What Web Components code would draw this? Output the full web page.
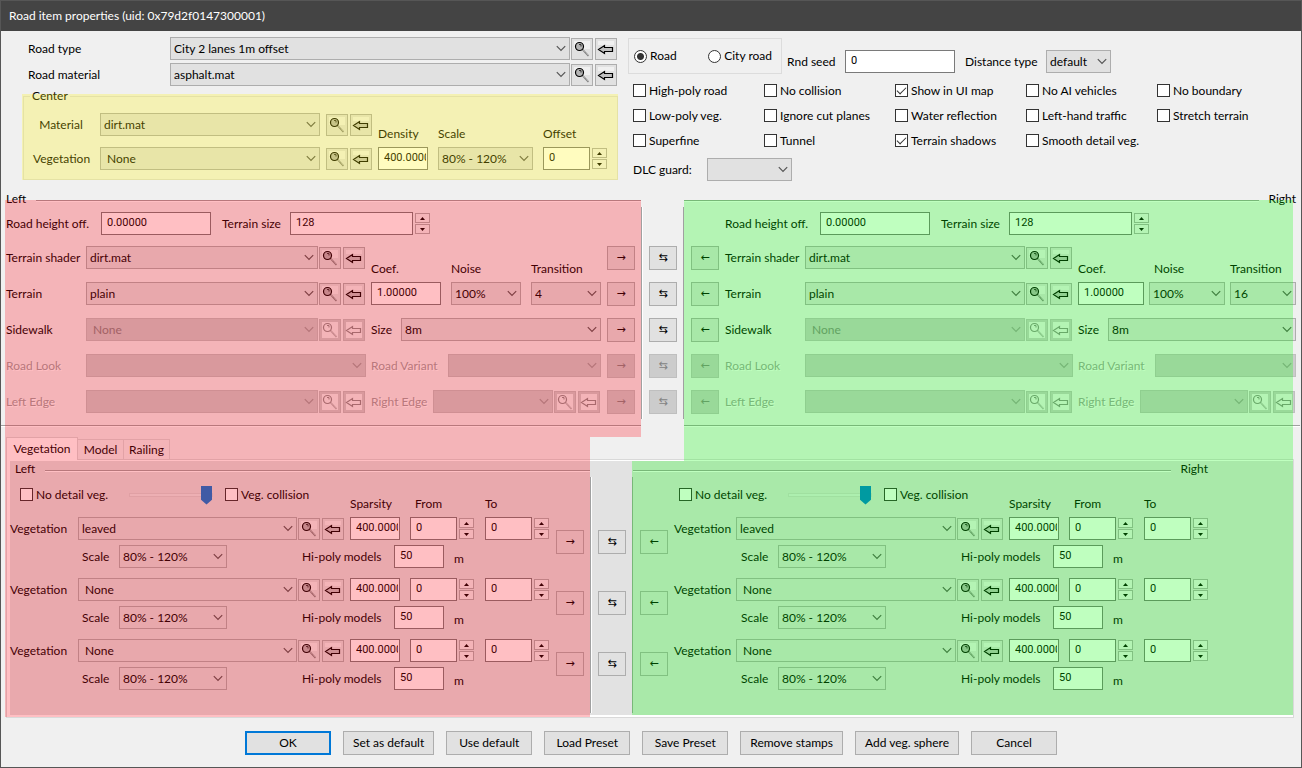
<!DOCTYPE html>
<html lang="en">
<head>
<meta charset="utf-8">
<title>Road item properties</title>
<style>
html,body{margin:0;min-height:100vh}
body{font:12px/16px Lato,"Open Sans",sans-serif;color:#000;background:#f0f0f0;display:flex}
</style>
</head>
<body>
<road-dialog></road-dialog>
<script>
const BASE = `
*{box-sizing:border-box}
:host{display:block}
:host([hidden]){display:none}
button,input,select{font:inherit;color:inherit;margin:0;border-radius:0}
label{white-space:nowrap}
.row{display:flex}
`;
class Ui extends HTMLElement {
  connectedCallback() {
    if (this.shadowRoot) return;
    this.attachShadow({ mode: 'open' }).innerHTML = `<style>${BASE}${this.css()}</style>${this.html()}`;
  }
  at(name, fallback = '') { return this.getAttribute(name) ?? fallback; }
  is(name) { return this.hasAttribute(name) ? name : ''; }
}

/* Search and assign buttons that follow a resource list */
customElements.define('ui-tools', class extends Ui {
  css() { return `
    :host{display:flex;gap:2px;flex:none}
    button{width:22px;height:22px;padding:0;border:1px solid #adadad;background:#e1e1e1;display:block}
    svg{display:block;width:20px;height:20px}
    button:disabled{border:1px solid #bfbfbf;background:#ccc}
    button:disabled .ink{stroke:#8c8c8c} button:disabled .fill{fill:#f0f0f0}
    button:disabled .grip{stroke:#b4b4b4}`; }
  html() { const d = this.is('disabled'); return `
    <button ${d} aria-label="Find"><svg viewBox="0 0 20 20"><path fill="#f0f0f0" d="M2 2h16v${d ? 16 : 8}H2z"/><path class="grip" d="M10.500 10.500 16.500 17" stroke="#808080" stroke-width="1.700"/><path d="m11 11 6 6" stroke="#d0d0d0" stroke-width=".8" stroke-dasharray="1 1"/><circle class="ink fill" cx="7.500" cy="7.500" r="4" fill="#b4b4b4" stroke="#000" stroke-width="1.200"/><path class="ink" d="M7 5.500h2v2" fill="none" stroke="#333" stroke-width="1"/></svg></button>
    <button ${d} aria-label="Use selected"><svg viewBox="0 0 20 20"><path fill="#f0f0f0" d="M2 2h16v${d ? 16 : 4}H2z"/><path class="ink fill" d="M2.500 10.500 8.500 6.500v2h8v4h-8v2z" fill="#c0c0c0" stroke="#000" stroke-width="1.200"/></svg></button>`; }
});

/* Labelled drop-down list */
customElements.define('ui-combo', class extends Ui {
  css() { return `
    :host{display:flex;align-items:center;min-width:0}
    :host([stacked]){flex-direction:column;align-items:stretch;gap:5px}
    :host([stacked]) .box{flex:none}
    :host([stacked]) label{width:auto;padding-left:var(--indent,0px)}
    label{width:var(--lw,auto);flex:none;text-align:var(--la,left);padding-right:var(--lp,0px)}
    :host([disabled][dim]) label{color:#a0a0a0;text-shadow:1px 1px #fff}
    .box{position:relative;flex:1;min-width:0;height:23px}
    select{appearance:none;display:block;width:100%;height:23px;padding:0 18px 0 3px;border:1px solid #adadad;background:#e1e1e1;line-height:20px}
    select:disabled{background:#ccc;border-color:#bfbfbf;color:#838383;opacity:1}
    svg{position:absolute;right:4px;top:8px;width:10px;height:7px;pointer-events:none}
    path{fill:none;stroke:#555;stroke-width:1.200}
    :host([disabled]) path{stroke:#9c9c9c}
    ui-tools{margin-left:var(--tg,1px)}`; }
  html() { const d = this.is('disabled'), l = this.at('label'); return `
    <label for="c">${l}</label>
    <div class="box"><select id="c" ${d}><option>${this.at('value')}</option></select>
    <svg viewBox="0 0 10 7"><path d="M.8 1.200 5 5.400 9.200 1.200"/></svg></div>
    ${this.is('tools') ? `<ui-tools ${d}></ui-tools>` : ''}`; }
});

/* Labelled text box, with an optional up/down pair */
customElements.define('ui-text', class extends Ui {
  css() { return `
    :host{display:flex;align-items:center;min-width:0}
    :host([stacked]){flex-direction:column;align-items:stretch;gap:5px}
    :host([stacked]) label{width:auto;padding-left:var(--indent,0px)}
    label{width:var(--lw,auto);flex:none}
    .row{flex:1;min-width:0}
    input{width:100%;height:23px;padding:0 1px 2px 5px;border:1px solid #7a7a7a;background:#fff;font:11px/16px Roboto,sans-serif}
    .spin{display:grid;gap:1px;margin:1px 0 1px 2px;width:15px;flex:none}
    .spin button{height:10px;padding:0;border:1px solid #adadad;background:#f0f0f0;display:grid;place-items:center}
    svg{display:block;width:5px;height:3px}`; }
  html() { return `
    ${this.at('label') ? `<label for="c">${this.at('label')}</label>` : ''}
    <div class="row"><input id="c" type="text" value="${this.at('value')}" ${this.at('label') ? '' : `aria-label="${this.at('name')}"`}>
    ${this.is('spin') ? `<div class="spin"><button aria-label="Increase"><svg viewBox="0 0 5 3"><path d="M0 3 2.500 0 5 3z"/></svg></button><button aria-label="Decrease"><svg viewBox="0 0 5 3"><path d="M0 0h5L2.500 3z"/></svg></button></div>` : ''}</div>`; }
});

customElements.define('ui-check', class extends Ui {
  css() { return `
    label{display:flex;align-items:center;gap:3px}
    input{appearance:none;width:13px;height:13px;flex:none;border:1px solid #333;background:#fff;display:block}
    input:checked::before{content:"";display:block;width:8px;height:4px;margin:2px 1px;border:solid #333;border-width:0 0 1px 1px;transform:rotate(-45deg)}`; }
  html() { return `<label><input type="checkbox" ${this.is('checked')}>${this.at('label')}</label>`; }
});

/* Column of buttons that copy values between the sides */
customElements.define('copy-column', class extends Ui {
  css() { return `
    :host{display:flex;flex-direction:column;gap:var(--cg,12px);width:28px;flex:none}
    button{height:24px;width:28px;padding:0;border:1px solid #adadad;background:#e1e1e1;font:11px/20px "DejaVu Sans",sans-serif;color:#000}
    button:disabled{background:#ccc;border-color:#bfbfbf;color:#838383}`; }
  html() {
    const n = +this.at('count'), off = +this.at('off', '0');
    return Array.from({ length: n }, (_, i) => `<button ${i >= n - off ? 'disabled' : ''}>${this.at('glyph')}</button>`).join('');
  }
});

/* Caption with an etched line beside it */
customElements.define('ui-caption', class extends Ui {
  css() { return `
    :host{display:flex;align-items:center;gap:10px;height:16px}
    :host([end]){flex-direction:row-reverse}
    i{flex:1;height:2px;margin-top:4px;background:linear-gradient(#a0a0a0 50%,#fff 50%)}`; }
  html() { return `<span>${this.at('label')}</span><i></i>`; }
});

customElements.define('center-group', class extends Ui {
  css() { return `
    :host{position:relative;margin-top:2px}
    :host::after{content:"";position:absolute;inset:6px 0 0 0;background:rgba(255,242,0,.25);pointer-events:none}
    fieldset{margin:0 0 0 1px;padding:9px 10px 9px 9px;border:1px solid #dcdcdc;min-width:0}
    legend{padding:0 2px;margin-left:-3px}
    .row{gap:10px;align-items:flex-end}
    .lists{flex:1;display:flex;flex-direction:column;gap:11px;margin-right:-4px;--lw:67px;--la:center;--lp:11px;--tg:6px}`; }
  html() { return `<fieldset><legend>Center</legend><div class="row">
    <div class="lists"><ui-combo label="Material" value="dirt.mat" tools></ui-combo>
    <ui-combo label="Vegetation" value="&nbsp;None" tools></ui-combo></div>
    <ui-text stacked label="Density" value="400.00000" style="width:50px"></ui-text>
    <ui-combo stacked label="Scale" value="80% - 120%" style="width:95px"></ui-combo>
    <ui-text stacked spin label="Offset" value="0" style="width:64px"></ui-text>
    </div></fieldset>`; }
});

customElements.define('road-options', class extends Ui {
  css() { return `
    .row{gap:10px;align-items:flex-end}
    .row>:not(fieldset){padding-bottom:1px}
    fieldset{margin:0 -5px 0 0;border:1px solid #dcdcdc;padding:0 9px 0 5px;width:154px;height:36px;display:flex;align-items:center;justify-content:space-between}
    fieldset label{display:flex;align-items:center;gap:3px}
    input{appearance:none;width:13px;height:13px;border:1px solid #333;border-radius:50%;background:#fff;display:block;margin:0}
    input:checked{background:radial-gradient(circle,#333 0 3px,#fff 4px)}
    .checks{display:grid;grid-template-columns:repeat(5,131px);grid-auto-rows:25px;align-items:center;margin:4px 0 5px 5px}
    .dlc{margin-left:5px;width:159px;--lw:74px}`; }
  html() { return `<div class="row">
    <fieldset aria-label="Item kind"><label><input type="radio" name="kind" checked>Road</label><label><input type="radio" name="kind">City road</label></fieldset>
    <ui-text label="Rnd seed" value="0" style="--lw:58px;width:168px"></ui-text>
    <ui-combo label="Distance type" value="default" style="--lw:81px;width:146px"></ui-combo></div>
    <div class="checks">${['High-poly road','No collision','*Show in UI map','No AI vehicles','No boundary','Low-poly veg.','Ignore cut planes','Water reflection','Left-hand traffic','Stretch terrain','Superfine','Tunnel','*Terrain shadows','Smooth detail veg.']
      .map(t => `<ui-check label="${t.replace('*', '')}" ${t[0] === '*' ? 'checked' : ''}></ui-check>`).join('')}</div>
    <ui-combo class="dlc" label="DLC guard:"></ui-combo>`; }
});

customElements.define('road-side', class extends Ui {
  css() { return `
    :host{position:relative;min-width:0}
    :host::after{content:"";position:absolute;pointer-events:none}
    :host([side=left])::after{inset:9px 0 -18px -1px;background:rgba(255,0,16,.25)}
    :host([side=right])::after{inset:9px 3px -42px 0;background:rgba(0,255,0,.25)}
    .body{display:flex;gap:6px;padding-right:6px;margin-top:5px}
    :host([side=right]) .body{padding:0 0 0 7px}
    copy-column{margin-top:34px}
    .fields{flex:1;min-width:0}
    .size{gap:11px;margin-bottom:11px}
    .grid{display:grid;grid-template-columns:360fr 230fr;column-gap:5px;grid-auto-rows:24px;row-gap:12px;align-items:start;--lw:80px}
    .grid>[tools]{padding-right:1px}
    :host([side=right]) .grid{grid-template-columns:348fr 218fr}
    .trio{grid-row:1 / span 2;grid-column:2;align-self:end;padding-bottom:1px;gap:10px;align-items:flex-end}
    .trio>*{flex:1}
    :host([side=right]) .trio{gap:5px}
    :host([side=right]) .trio :nth-child(2){flex:0 0 76px;--indent:5px}`; }
  html() {
    const r = this.at('side') === 'right';
    const arrows = `<copy-column count="5" off="2" glyph="${r ? '←' : '→'}"></copy-column>`;
    return `<ui-caption label="${r ? 'Right' : 'Left'}" ${r ? 'end' : ''}></ui-caption>
    <div class="body">${r ? arrows : ''}<div class="fields">
      <div class="row size"><ui-text label="Road height off." value="0.00000" style="--lw:95px;width:205px"></ui-text>
      <ui-text spin label="Terrain size" value="128" style="--lw:68px;width:208px"></ui-text></div>
      <div class="grid">
        <ui-combo label="Terrain shader" value="dirt.mat" tools></ui-combo>
        <div class="row trio"><ui-text stacked label="Coef." value="1.00000"></ui-text>
          <ui-combo stacked label="Noise" value="100%"></ui-combo>
          <ui-combo stacked label="Transition" value="${r ? 16 : 4}"></ui-combo></div>
        <ui-combo label="Terrain" value="plain" tools></ui-combo>
        <ui-combo label="Sidewalk" value="&nbsp;None" tools disabled></ui-combo>
        <ui-combo label="Size" value="8m" style="--lw:30px"></ui-combo>
        <ui-combo label="Road Look" disabled dim></ui-combo>
        <ui-combo label="Road Variant" disabled dim style="--lw:77px"></ui-combo>
        <ui-combo label="Left Edge" disabled dim tools></ui-combo>
        <ui-combo label="Right Edge" disabled dim tools style="--lw:62px"></ui-combo>
      </div></div>${r ? '' : arrows}</div>`;
  }
});

customElements.define('vegetation-side', class extends Ui {
  css() { return `
    :host{position:relative;min-width:0;--cg:37px}
    :host::after{content:"";position:absolute;pointer-events:none}
    :host([side=left])::after{inset:-24px 0 -2px -5px;background:rgba(255,0,16,.25)}
    :host([side=right])::after{inset:0 0 0 -1px;background:rgba(0,255,0,.25)}
    ui-caption{padding-left:5px}
    .body{display:flex;padding:7px 6px 25px 0;gap:7px;--vl:68px;--start:10px;--in:72px}
    :host([side=right]) ui-caption{padding:0 85px 0 0}
    :host([side=right]) .body{padding:7px 85px 25px 7px;gap:6px;--vl:62px;--start:5px;--in:67px}
    copy-column{margin-top:46px}
    .list{flex:1;min-width:0;display:flex;flex-direction:column;gap:10px}
    .top{align-items:stretch}
    .main{flex:1;min-width:0;display:flex;flex-direction:column;justify-content:space-between;margin-right:6px;--lw:var(--vl)}
    .checks{display:flex;align-items:center;height:33px;padding:0 0 12px var(--start)}
    .checks ui-check:first-child{width:109px}
    .nums{gap:10px;align-items:flex-end}
    .nums>:nth-child(2){--indent:5px;margin-right:1px}
    .sub{margin-top:5px;padding-left:var(--in);align-items:center}
    .m{margin-left:10px;padding-top:4px}
    input[type=range]{appearance:none;width:84px;height:19px;background:none;padding:0;margin-right:12px}
    input::-webkit-slider-runnable-track{height:4px;background:#e7eaea;border:1px solid #d6d6d6}
    input::-webkit-slider-thumb{appearance:none;width:11px;height:19px;margin-top:-8px;background:#0078d7;clip-path:polygon(0 0,100% 0,100% 75%,50% 100%,0 75%)}`; }
  html() {
    const r = this.at('side') === 'right';
    const arrows = `<copy-column count="3" glyph="${r ? '←' : '→'}"></copy-column>`;
    const entry = (v, first) => `<div><div class="row top"><div class="main">
      ${first ? `<div class="checks"><ui-check label="No detail veg."></ui-check><input type="range" value="100" aria-label="Detail density"><ui-check label="Veg. collision"></ui-check></div>` : ''}
      <ui-combo label="Vegetation" value="${v}" tools></ui-combo></div>
      <div class="row nums">${[['Sparsity','400.00000',50,''],['From','0',64,'spin'],['To','0',64,'spin']]
        .map(([n, x, w, s]) => `<ui-text ${first ? `stacked label="${n}"` : `name="${n}"`} value="${x}" ${s} style="width:${w}px"></ui-text>`).join('')}</div></div>
      <div class="row sub"><ui-combo label="Scale" value="80% - 120%" style="--lw:37px;width:145px;margin-right:75px"></ui-combo>
      <ui-text label="Hi-poly models" value="50" style="--lw:92px;width:142px"></ui-text><span class="m">m</span></div></div>`;
    return `<ui-caption label="${r ? 'Right' : 'Left'}" ${r ? 'end' : ''}></ui-caption>
    <div class="body">${r ? arrows : ''}<div class="list">${entry('leaved', true)}${entry('&nbsp;None')}${entry('&nbsp;None')}</div>${r ? '' : arrows}</div>`;
  }
});

customElements.define('road-dialog', class extends Ui {
  css() { return `
    :host{flex:1;min-width:1100px;border:1px solid #565656;background:#f0f0f0}
    header{height:30px;padding:7px 8px;background:#444;color:#fff}
    .head{display:grid;grid-template-columns:minmax(0,1fr) 673px;column-gap:10px;padding:6px 0 10px 21px}
    .lists{padding:0 1px 0 6px;display:grid;gap:3px;--lw:142px}
    road-options{padding-top:1px}
    .sides{display:grid;grid-template-columns:635fr 43px 612fr;padding:0 5px}
    .mid{margin-top:16px;padding:39px 6px 5px 7px;border:solid #a0a0a0;border-width:0 1px;box-shadow:inset 1px 0 #fff}
    .rules{display:grid;grid-template-columns:640fr 43px 616fr;margin:6px 1px 10px 0}
    .rules i{height:2px;background:linear-gradient(#a0a0a0 50%,#fff 50%)}
    .rules i:last-child{grid-column:3}
    .tabs{display:flex;align-items:flex-end;margin:0 5px -1px;height:23px}
    .tabs button{height:21px;padding:0 5px;min-width:46px;border:1px solid #d9d9d9;border-left:0;background:#f0f0f0}
    .tabs button:first-child{height:23px;width:72px;border-left:1px solid #d9d9d9;border-bottom:0;background:#fff}
    .page{margin:0 7px 0 5px;border:1px solid #d9d9d9;background:#fff;padding:1px 0 2px 3px}
    .veg{display:grid;grid-template-columns:580fr 43px 660fr;background:#e2e2e2;--cg:37px}
    .veg .mid{padding:53px 7px 0;margin-bottom:2px}
    footer{display:flex;justify-content:center;gap:12px;padding:13px 0 12px}
    footer button{height:24px;min-width:86px;padding:0 9px;border:1px solid #adadad;background:#e1e1e1}
    footer button:first-child{border:2px solid #0078d7}`; }
  html() { return `<header>Road item properties (uid: 0x79d2f0147300001)</header>
    <div class="head"><div><div class="lists">
      <ui-combo label="Road type" value="City 2 lanes 1m offset" tools></ui-combo>
      <ui-combo label="Road material" value="asphalt.mat" tools></ui-combo></div>
      <center-group></center-group></div><road-options></road-options></div>
    <div class="sides"><road-side side="left"></road-side>
      <div class="mid"><copy-column count="5" off="2" glyph="⇆"></copy-column></div>
      <road-side side="right"></road-side></div>
    <div class="rules"><i></i><i></i></div>
    <div class="tabs" role="tablist"><button role="tab" aria-selected="true">Vegetation</button><button role="tab">Model</button><button role="tab">Railing</button></div>
    <div class="page"><div class="veg"><vegetation-side side="left"></vegetation-side>
      <div class="mid"><copy-column count="3" glyph="⇆"></copy-column></div>
      <vegetation-side side="right"></vegetation-side></div></div>
    <footer>${['OK','Set as default','Use default','Load Preset','Save Preset','Remove stamps','Add veg. sphere','Cancel'].map(t => `<button>${t}</button>`).join('')}</footer>`; }
});
</script>
</body>
</html>
